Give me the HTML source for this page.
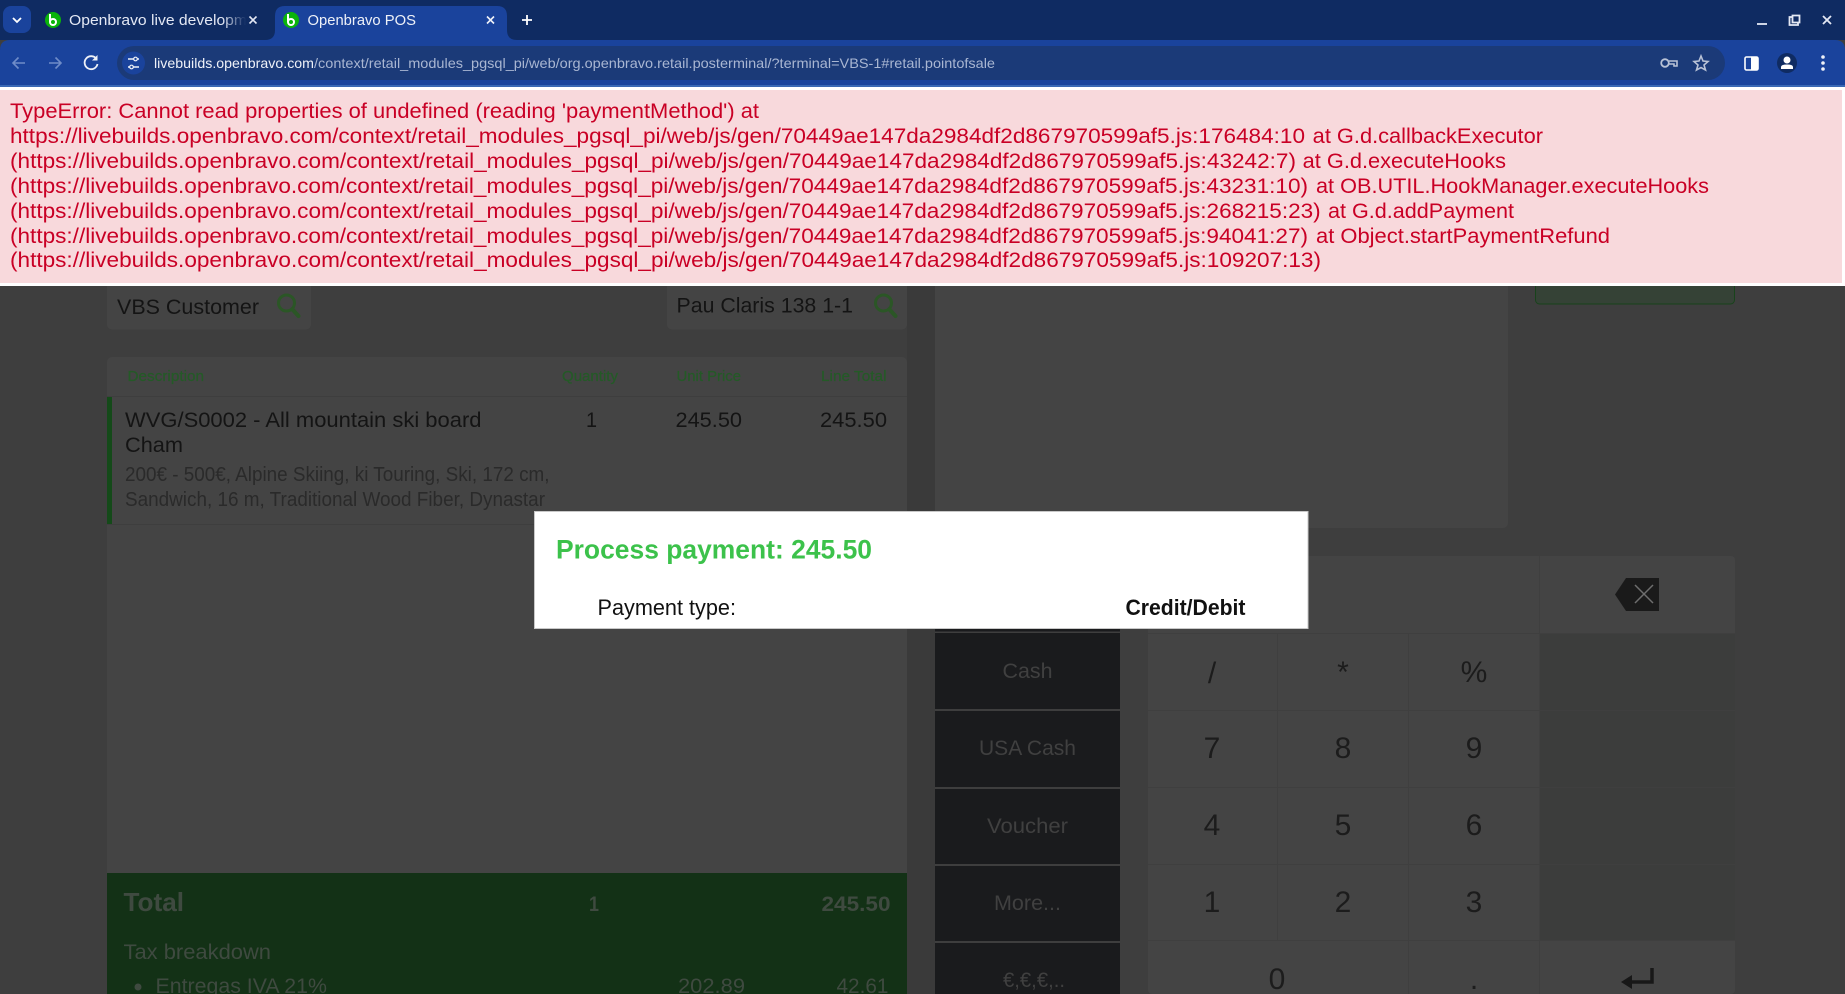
<!DOCTYPE html>
<html lang="en">
<head>
<meta charset="utf-8">
<title>Openbravo POS</title>
<style>
html,body{margin:0;padding:0;width:1845px;height:994px;overflow:hidden;background:#3e3e3e}
svg{display:block;font-family:"Liberation Sans",sans-serif}
</style>
</head>
<body>
<svg width="1845" height="994" viewBox="0 0 1845 994" xmlns="http://www.w3.org/2000/svg">
<defs>
<linearGradient id="fade" x1="0" x2="1" y1="0" y2="0"><stop offset="0" stop-color="#0f2b62" stop-opacity="0"/><stop offset="1" stop-color="#0f2b62"/></linearGradient>
</defs>

<!-- page background -->
<rect x="0" y="286" width="1845" height="708" fill="#3e3e3e"/>
<rect x="907" y="286" width="28" height="708" fill="#3a3a3a"/>

<!-- customer boxes -->
<rect x="107" y="270" width="204" height="59.500" rx="5" fill="#444"/>
<text x="117" y="314" font-size="21" fill="#141414" textLength="142" lengthAdjust="spacingAndGlyphs">VBS Customer</text>
<g fill="none" stroke="#2b5626"><circle cx="286.500" cy="303" r="8" stroke-width="3"/><path d="M292.500 309.500L298.500 316" stroke-width="4" stroke-linecap="round"/></g>
<rect x="667" y="270" width="240" height="59.500" rx="5" fill="#444"/>
<text x="676.500" y="312.500" font-size="21" fill="#141414" textLength="176.500" lengthAdjust="spacingAndGlyphs">Pau Claris 138 1-1</text>
<g fill="none" stroke="#2b5626"><circle cx="883.500" cy="303" r="8" stroke-width="3"/><path d="M889.500 309.500L895.500 316" stroke-width="4" stroke-linecap="round"/></g>

<!-- receipt panel -->
<rect x="107" y="357" width="800" height="530" rx="5" fill="#444"/>
<path d="M107 396.500H907M107 524.500H907" stroke="#3e3e3e" stroke-width="1"/>
<rect x="107" y="397" width="5" height="127" fill="#144a19"/>
<g font-size="15" fill="#245a27" stroke="#245a27" stroke-width="0.250">
<text x="127.500" y="381" textLength="76.500" lengthAdjust="spacingAndGlyphs">Description</text>
<text x="562" y="381" textLength="56" lengthAdjust="spacingAndGlyphs">Quantity</text>
<text x="676.500" y="381" textLength="64.500" lengthAdjust="spacingAndGlyphs">Unit Price</text>
<text x="821" y="381" textLength="65.500" lengthAdjust="spacingAndGlyphs">Line Total</text>
</g>
<g font-size="21" fill="#141414">
<text x="125" y="427" textLength="356.500" lengthAdjust="spacingAndGlyphs">WVG/S0002 - All mountain ski board</text>
<text x="125" y="452" textLength="58" lengthAdjust="spacingAndGlyphs">Cham</text>
<text x="586" y="427" textLength="11" lengthAdjust="spacingAndGlyphs">1</text>
<text x="675.500" y="427" textLength="66.500" lengthAdjust="spacingAndGlyphs">245.50</text>
<text x="820" y="427" textLength="67" lengthAdjust="spacingAndGlyphs">245.50</text>
</g>
<g font-size="20" fill="#2a2a2a">
<text x="125" y="481" textLength="424.500" lengthAdjust="spacingAndGlyphs">200€ - 500€, Alpine Skiing, ki Touring, Ski, 172 cm,</text>
<text x="125" y="506" textLength="420" lengthAdjust="spacingAndGlyphs">Sandwich, 16 m, Traditional Wood Fiber, Dynastar</text>
</g>

<!-- total panel -->
<rect x="107" y="873" width="800" height="121" fill="#133116"/>
<g fill="#3f4a40">
<text x="123.500" y="911" font-size="26" font-weight="bold" textLength="60.500" lengthAdjust="spacingAndGlyphs">Total</text>
<text x="589" y="911" font-size="21" font-weight="bold" textLength="10" lengthAdjust="spacingAndGlyphs">1</text>
<text x="821.500" y="911" font-size="21" font-weight="bold" textLength="69" lengthAdjust="spacingAndGlyphs">245.50</text>
<text x="123.500" y="959" font-size="21" textLength="147.500" lengthAdjust="spacingAndGlyphs">Tax breakdown</text>
<circle cx="138" cy="987" r="3.500"/>
<text x="155.500" y="993" font-size="21" textLength="171.500" lengthAdjust="spacingAndGlyphs">Entregas IVA 21%</text>
<text x="678" y="993" font-size="21" textLength="67" lengthAdjust="spacingAndGlyphs">202.89</text>
<text x="836.500" y="993" font-size="21" textLength="52" lengthAdjust="spacingAndGlyphs">42.61</text>
</g>

<!-- right upper panel -->
<rect x="935" y="270" width="573" height="258" rx="5" fill="#444"/>
<rect x="1535.500" y="270" width="199" height="34" rx="4" fill="#354236" stroke="#18431b"/>

<!-- payment buttons -->
<g fill="#1a1b1d">
<rect x="935" y="600" width="185" height="31.500"/>
<rect x="935" y="633" width="185" height="76"/>
<rect x="935" y="711" width="185" height="76"/>
<rect x="935" y="789" width="185" height="75"/>
<rect x="935" y="866" width="185" height="75"/>
<rect x="935" y="943" width="185" height="51"/>
</g>
<g font-size="21" fill="#404040" text-anchor="middle">
<text x="1027.500" y="678" textLength="50" lengthAdjust="spacingAndGlyphs">Cash</text>
<text x="1027.500" y="755" textLength="97" lengthAdjust="spacingAndGlyphs">USA Cash</text>
<text x="1027.500" y="833" textLength="81" lengthAdjust="spacingAndGlyphs">Voucher</text>
<text x="1027.500" y="910" textLength="67" lengthAdjust="spacingAndGlyphs">More...</text>
<text x="1034" y="987" textLength="62" lengthAdjust="spacingAndGlyphs">€,€,€,..</text>
</g>

<!-- numpad -->
<rect x="1148" y="556" width="587" height="438" rx="4" fill="#444"/>
<rect x="1539.500" y="633" width="195.500" height="307" fill="#3c3d3c"/>
<path d="M1148 633.500H1735M1148 710.500H1735M1148 787.500H1735M1148 864.500H1735M1148 940.500H1735M1277.500 633V941M1408.500 633V994M1539.500 556V633M1539.500 941V994" stroke="#3f3f3f" stroke-width="1"/>
<g font-size="30" fill="#1c1c1c" text-anchor="middle">
<text x="1212" y="683">/</text>
<text x="1343" y="682">*</text>
<text x="1474" y="682">%</text>
<text x="1212" y="758">7</text>
<text x="1343" y="758">8</text>
<text x="1474" y="758">9</text>
<text x="1212" y="835">4</text>
<text x="1343" y="835">5</text>
<text x="1474" y="835">6</text>
<text x="1212" y="912">1</text>
<text x="1343" y="912">2</text>
<text x="1474" y="912">3</text>
<text x="1277" y="989">0</text>
<text x="1474" y="989">.</text>
</g>
<path d="M1615 594.500L1626 578H1659V611H1626Z" fill="#1a1a1a"/>
<path d="M1635 585L1653 603M1653 585L1635 603" stroke="#6e6e6e" stroke-width="1.500" fill="none"/>
<path d="M1652 968V982H1630" stroke="#181818" stroke-width="3.500" fill="none"/>
<path d="M1621 982L1632 975V989Z" fill="#181818"/>

<!-- modal -->
<rect x="534.500" y="511.500" width="773.500" height="117" fill="#fff" stroke="#c8c8c8"/>
<text x="556" y="558.500" font-size="27" font-weight="bold" fill="#3cc24b" textLength="316" lengthAdjust="spacingAndGlyphs">Process payment: 245.50</text>
<text x="597.500" y="615" font-size="22" fill="#111" textLength="138.500" lengthAdjust="spacingAndGlyphs">Payment type:</text>
<text x="1125.500" y="615" font-size="22" font-weight="bold" fill="#111" textLength="120" lengthAdjust="spacingAndGlyphs">Credit/Debit</text>

<!-- error banner -->
<rect x="0" y="86" width="1845" height="200" fill="#fff"/>
<rect x="0" y="90" width="1842" height="193" fill="#f8d9dc"/>
<g font-size="21" fill="#c90025">
<text x="10" y="118" textLength="749" lengthAdjust="spacingAndGlyphs">TypeError: Cannot read properties of undefined (reading 'paymentMethod') at</text>
<text x="10" y="143" textLength="1295" lengthAdjust="spacingAndGlyphs">https://livebuilds.openbravo.com/context/retail_modules_pgsql_pi/web/js/gen/70449ae147da2984df2d867970599af5.js:176484:10</text>
<text x="1312.700" y="143" textLength="230.300" lengthAdjust="spacingAndGlyphs">at G.d.callbackExecutor</text>
<text x="10" y="168" textLength="1286" lengthAdjust="spacingAndGlyphs">(https://livebuilds.openbravo.com/context/retail_modules_pgsql_pi/web/js/gen/70449ae147da2984df2d867970599af5.js:43242:7)</text>
<text x="1302.700" y="168" textLength="203.300" lengthAdjust="spacingAndGlyphs">at G.d.executeHooks</text>
<text x="10" y="193" textLength="1298" lengthAdjust="spacingAndGlyphs">(https://livebuilds.openbravo.com/context/retail_modules_pgsql_pi/web/js/gen/70449ae147da2984df2d867970599af5.js:43231:10)</text>
<text x="1316" y="193" textLength="393" lengthAdjust="spacingAndGlyphs">at OB.UTIL.HookManager.executeHooks</text>
<text x="10" y="218" textLength="1310.700" lengthAdjust="spacingAndGlyphs">(https://livebuilds.openbravo.com/context/retail_modules_pgsql_pi/web/js/gen/70449ae147da2984df2d867970599af5.js:268215:23)</text>
<text x="1328" y="218" textLength="186" lengthAdjust="spacingAndGlyphs">at G.d.addPayment</text>
<text x="10" y="243" textLength="1298" lengthAdjust="spacingAndGlyphs">(https://livebuilds.openbravo.com/context/retail_modules_pgsql_pi/web/js/gen/70449ae147da2984df2d867970599af5.js:94041:27)</text>
<text x="1316" y="243" textLength="294" lengthAdjust="spacingAndGlyphs">at Object.startPaymentRefund</text>
<text x="10" y="267" textLength="1311" lengthAdjust="spacingAndGlyphs">(https://livebuilds.openbravo.com/context/retail_modules_pgsql_pi/web/js/gen/70449ae147da2984df2d867970599af5.js:109207:13)</text>
</g>

<!-- browser chrome -->
<rect x="0" y="0" width="1845" height="40" fill="#0f2b62"/>
<path d="M0 86V50Q0 40 10 40H1835Q1845 40 1845 50V86Z" fill="#1a439c"/>
<rect x="0" y="85" width="1845" height="2" fill="#3a68b4"/>
<rect x="3" y="6" width="28" height="27" rx="8" fill="#1a439c"/>
<path d="M13 18L17 22L21 18" stroke="#fff" stroke-width="1.800" fill="none"/>
<path d="M265 40Q275 40 275 30V16Q275 6 285 6H497Q507 6 507 16V30Q507 40 517 40Z" fill="#1a439c"/>

<circle cx="53" cy="20" r="8" fill="#0ab40a"/>
<path d="M50 14V22" stroke="#fff" stroke-width="2"/><circle cx="53" cy="22" r="3" fill="none" stroke="#fff" stroke-width="2"/>
<text x="69" y="25" font-size="14.500" fill="#e3e8f4" textLength="178" lengthAdjust="spacingAndGlyphs">Openbravo live developm</text>
<rect x="222" y="8" width="24" height="26" fill="url(#fade)"/>
<path d="M249.500 16.500L256.500 23.500M256.500 16.500L249.500 23.500" stroke="#e3e8f4" stroke-width="1.600"/>

<circle cx="291" cy="20" r="8" fill="#0ab40a"/>
<path d="M288 14V22" stroke="#fff" stroke-width="2"/><circle cx="291" cy="22" r="3" fill="none" stroke="#fff" stroke-width="2"/>
<text x="307.500" y="25" font-size="14.500" fill="#eef1f8" textLength="108.500" lengthAdjust="spacingAndGlyphs">Openbravo POS</text>
<path d="M487 16.500L494 23.500M494 16.500L487 23.500" stroke="#eef1f8" stroke-width="1.600"/>
<path d="M527 15V25M522 20H532" stroke="#fff" stroke-width="1.800"/>

<path d="M1757 24H1767" stroke="#e3e8f4" stroke-width="1.800"/>
<path d="M1792 17H1789.500V25H1798V23M1792.500 15.500H1799.500V22.500H1792.500Z" stroke="#e3e8f4" stroke-width="1.800" fill="none"/>
<path d="M1823 16L1831 24M1831 16L1823 24" stroke="#e3e8f4" stroke-width="1.800"/>

<path d="M25 63H13.500M18.500 57.500L13 63L18.500 68.500" stroke="#6f8cc8" stroke-width="1.600" fill="none"/>
<path d="M49 63H60.500M55.500 57.500L61 63L55.500 68.500" stroke="#6f8cc8" stroke-width="1.600" fill="none"/>
<path d="M96.500 59A6.500 6.500 0 1 0 97.500 64" stroke="#eef1f8" stroke-width="1.800" fill="none"/><path d="M97.500 55V60.500H92Z" fill="#eef1f8"/>

<rect x="117" y="46" width="1608" height="34" rx="17" fill="#1b3a78"/>
<circle cx="133.500" cy="63" r="11.500" fill="#1a439c"/>
<path d="M128 59H134M137 59H139M128 67H130M133 67H139" stroke="#eef1f8" stroke-width="1.600"/>
<circle cx="135.500" cy="59" r="1.800" fill="none" stroke="#eef1f8" stroke-width="1.200"/><circle cx="131.500" cy="67" r="1.800" fill="none" stroke="#eef1f8" stroke-width="1.200"/>
<text x="154" y="68" font-size="14" fill="#eef1f8" textLength="160" lengthAdjust="spacingAndGlyphs">livebuilds.openbravo.com</text>
<text x="314" y="68" font-size="14" fill="#a9b6d2" textLength="681" lengthAdjust="spacingAndGlyphs">/context/retail_modules_pgsql_pi/web/org.openbravo.retail.posterminal/?terminal=VBS-1#retail.pointofsale</text>

<circle cx="1665" cy="63" r="3.800" fill="none" stroke="#b9c2d6" stroke-width="1.800"/>
<path d="M1669 61H1677V66H1674V64H1669" stroke="#b9c2d6" stroke-width="1.600" fill="none"/>
<path d="M1701 56L1703 61L1708 61.500L1704 65L1705.500 70L1701 67.500L1696.500 70L1698 65L1694 61.500L1699 61Z" fill="none" stroke="#b9c2d6" stroke-width="1.600"/>
<rect x="1745" y="57" width="13" height="13" rx="1.500" fill="none" stroke="#fff" stroke-width="1.600"/><rect x="1751" y="57" width="7" height="13" fill="#fff"/>
<circle cx="1787" cy="63" r="10" fill="#0f2b62"/>
<circle cx="1787" cy="60" r="3.500" fill="#fff"/><path d="M1781 69V67Q1781 64.500 1787 64.500Q1793 64.500 1793 67V69Z" fill="#fff"/>
<circle cx="1823" cy="57" r="1.800" fill="#eef1f8"/><circle cx="1823" cy="63" r="1.800" fill="#eef1f8"/><circle cx="1823" cy="69" r="1.800" fill="#eef1f8"/>
</svg>
</body>
</html>
